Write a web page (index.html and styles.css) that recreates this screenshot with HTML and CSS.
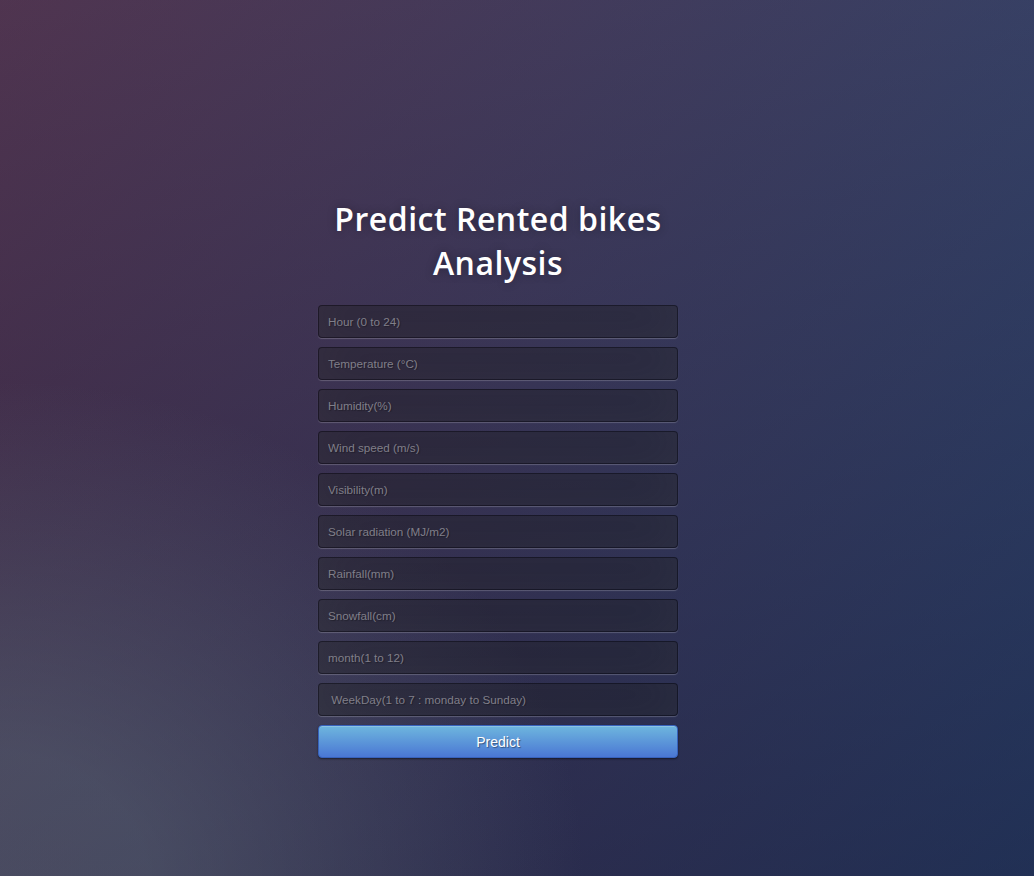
FILE: index.html
```html
<!DOCTYPE html>
<html>
<head>
<meta charset="utf-8">
<title>Predict Rented bikes</title>
<link rel="stylesheet" href="styles.css">
</head>
<body>
<main class="page">
  <div class="login">
    <h1 class="title">Predict Rented bikes Analysis</h1>
    <form class="form">
      <input class="field" type="text" placeholder="Hour (0 to 24)">
      <input class="field" type="text" placeholder="Temperature (°C)">
      <input class="field" type="text" placeholder="Humidity(%)">
      <input class="field" type="text" placeholder="Wind speed (m/s)">
      <input class="field" type="text" placeholder="Visibility(m)">
      <input class="field" type="text" placeholder="Solar radiation (MJ/m2)">
      <input class="field" type="text" placeholder="Rainfall(mm)">
      <input class="field" type="text" placeholder="Snowfall(cm)">
      <input class="field" type="text" placeholder="month(1 to 12)">
      <input class="field" type="text" placeholder=" WeekDay(1 to 7 : monday to Sunday)">
      <button class="btn" type="button">Predict</button>
    </form>
  </div>
</main>
</body>
</html>
```

FILE: styles.css
```css
html, body {
  margin: 0;
  width: 100%;
  height: 100%;
}
body {
  font-family: "Open Sans", "Liberation Sans", sans-serif;
  background: #1b2853;
  background:
    radial-gradient(ellipse farthest-corner at 0% 100%, rgba(104,128,138,.4) 10%, rgba(138,114,76,0) 40%),
    linear-gradient(to bottom, rgba(57,173,219,.25) 0%, rgba(42,60,87,.4) 100%),
    linear-gradient(135deg, #570c21 0%, #1b2853 100%);
  overflow: hidden;
}
.page {
  display: flex;
  justify-content: center;
  padding: 197px 38px 0 0;
}
.login {
  width: 360px;
  display: flex;
  flex-direction: column;
}
.title {
  margin: 0 0 20px;
  color: #fff;
  font-size: 32px;
  font-weight: 600;
  line-height: 44px;
  letter-spacing: 0.5px;
  text-align: center;
  text-shadow: 0 0 10px rgba(0,0,0,0.3);
}
.form {
  display: flex;
  flex-direction: column;
  margin: 0;
}
.field {
  box-sizing: border-box;
  width: 100%;
  height: 33px;
  margin: 0 0 9px;
  padding: 0 9px;
  font-family: "Liberation Sans", Arial, sans-serif;
  font-size: 11.7px;
  color: #fff;
  background: rgba(0,0,0,0.3);
  border: 1px solid rgba(0,0,0,0.3);
  border-radius: 4px;
  outline: none;
  text-shadow: 1px 1px 1px rgba(0,0,0,0.3);
  box-shadow: inset 0 -5px 45px rgba(100,100,100,0.2), 0 1px 1px rgba(255,255,255,0.2);
}
.field::placeholder {
  color: #807f89;
  opacity: 1;
}
.btn {
  box-sizing: border-box;
  width: 100%;
  height: 33px;
  margin-top: 0;
  padding: 0 14px;
  font-family: "Liberation Sans", Arial, sans-serif;
  font-size: 14px;
  color: #fff;
  background-color: #4a77d4;
  background-image: linear-gradient(to bottom, #6eb6de, #4a77d4);
  border: 1px solid #3762bc;
  border-radius: 4px;
  text-shadow: 1px 1px 1px rgba(0,0,0,0.4);
  box-shadow: inset 0 1px 0 rgba(255,255,255,0.2), 0 1px 2px rgba(0,0,0,0.5);
  cursor: pointer;
}
```
